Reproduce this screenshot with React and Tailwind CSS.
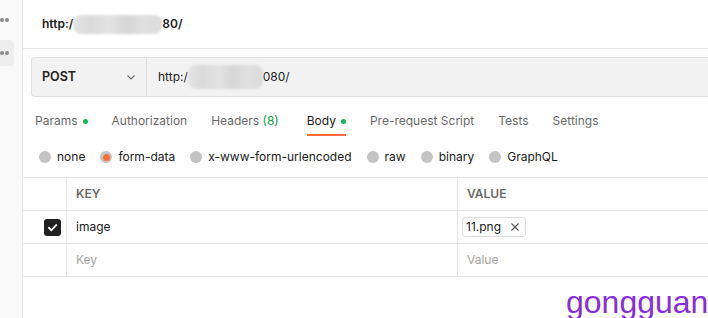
import React from "react";

function Dots() {
  return (
    <div className="flex gap-[1px]">
      <div className="w-[4px] h-[4px] rounded-full bg-[#8a8a8a]" />
      <div className="w-[4px] h-[4px] rounded-full bg-[#8a8a8a]" />
    </div>
  );
}

function Radio({ label, selected }) {
  return (
    <div className="flex items-center gap-[6px]">
      {selected ? (
        <div className="w-[12px] h-[12px] rounded-full bg-[#c4c4c4] flex items-center justify-center">
          <div className="w-[7px] h-[7px] rounded-full bg-[#ff6c37]" />
        </div>
      ) : (
        <div className="w-[12px] h-[12px] rounded-full bg-[#c4c4c4]" />
      )}
      <span>{label}</span>
    </div>
  );
}

function Blur({ w, h }) {
  return (
    <div
      className="rounded-[8px] bg-[linear-gradient(90deg,#e4e4e4,#dadada,#e3e3e3,#d6d6d6,#e0e0e0,#dbdbdb)] blur-[1px]"
      style={{ width: w, height: h }}
    />
  );
}

export default function App() {
  return (
    <div className="w-[708px] h-[318px] bg-white flex overflow-hidden relative font-['Inter',sans-serif] text-[#212121]">
      <div className="w-[23px] shrink-0 bg-[#f9f9f9] border-r border-[#e6e6e6] flex flex-col">
        <div className="h-[40px] flex items-center">
          <Dots />
        </div>
        <div className="h-[26px] w-[14px] bg-[#ededed] rounded-r-[4px] flex items-center">
          <Dots />
        </div>
      </div>
      <div className="flex-1 flex flex-col min-w-0">
        <div className="h-[49px] shrink-0 border-b border-[#e6e6e6] flex items-center pl-[19px] text-[12px] font-semibold">
          <span>http:/</span>
          <Blur w={89} h={19} />
          <span>80/</span>
        </div>
        <div className="mt-[8px] ml-[8px] h-[40px] shrink-0 flex bg-[#f2f2f2] border border-[#e0e0e0] border-r-0 rounded-l-[4px]">
          <div className="w-[115px] shrink-0 border-r border-[#e0e0e0] flex items-center justify-between pl-[10px] pr-[9px] text-[12.5px] font-semibold">
            <span>POST</span>
            <svg width="12" height="12" viewBox="0 0 12 12" fill="none">
              <path d="M2.5 4.5 L6 8 L9.5 4.5" stroke="#6b6b6b" strokeWidth="1.1" />
            </svg>
          </div>
          <div className="flex items-center pl-[11px] text-[12px] text-[#212121]">
            <span>http:/</span>
            <Blur w={75} h={24} />
            <span>080/</span>
          </div>
        </div>
        <div className="flex items-center h-[40px] pl-[12px] gap-[24px] text-[12px] text-[#6b6b6b] mt-[4px]">
          <div className="flex items-center gap-[5px]">
            <span>Params</span>
            <div className="w-[5px] h-[5px] rounded-full bg-[#0cbb52]" />
          </div>
          <span>Authorization</span>
          <span>
            Headers <span className="text-[#0c9f48]">(8)</span>
          </span>
          <div className="relative flex items-center gap-[5px] text-[#212121] h-full ml-[4px]">
            <span>Body</span>
            <div className="w-[5px] h-[5px] rounded-full bg-[#0cbb52]" />
            <div className="absolute left-0 right-0 bottom-[5px] h-[2px] bg-[#ff6c37]" />
          </div>
          <span>Pre-request Script</span>
          <span>Tests</span>
          <span>Settings</span>
        </div>
        <div className="flex items-center h-[32px] mb-[4px] pl-[16px] gap-[15px] text-[12px] text-[#212121]">
          <Radio label="none" />
          <Radio label="form-data" selected />
          <Radio label="x-www-form-urlencoded" />
          <Radio label="raw" />
          <Radio label="binary" />
          <Radio label="GraphQL" />
        </div>
        <div className="border-t border-[#e6e6e6] text-[12px]">
          <div className="flex h-[33px] border-b border-[#e6e6e6]">
            <div className="w-[44px] shrink-0 border-r border-[#e6e6e6]" />
            <div className="w-[391px] shrink-0 border-r border-[#e6e6e6] flex items-center pl-[9px] font-semibold text-[#6b6b6b] text-[12px]">
              KEY
            </div>
            <div className="flex-1 flex items-center pl-[9px] font-semibold text-[#6b6b6b] text-[12px]">
              VALUE
            </div>
          </div>
          <div className="flex h-[33px] border-b border-[#e6e6e6]">
            <div className="w-[44px] shrink-0 border-r border-[#e6e6e6] flex items-center justify-end pr-[5px]">
              <div className="w-[17px] h-[17px] rounded-[3px] bg-[#212121] flex items-center justify-center">
                <svg width="11" height="11" viewBox="0 0 12 12" fill="none">
                  <path d="M2 6.3 L4.8 9 L10 3.3" stroke="white" strokeWidth="2" strokeLinecap="round" strokeLinejoin="round" />
                </svg>
              </div>
            </div>
            <div className="w-[391px] shrink-0 border-r border-[#e6e6e6] flex items-center pl-[9px]">
              image
            </div>
            <div className="flex-1 flex items-center pl-[4px]">
              <div className="flex items-center h-[20px] border border-[#dedede] rounded-[3px] pl-[3px] pr-[5px] gap-[9px]">
                <span>11.png</span>
                <svg width="10" height="10" viewBox="0 0 10 10">
                  <path d="M1.5 1.5 L8.5 8.5 M8.5 1.5 L1.5 8.5" stroke="#555" strokeWidth="1.1" />
                </svg>
              </div>
            </div>
          </div>
          <div className="flex h-[33px] border-b border-[#e6e6e6]">
            <div className="w-[44px] shrink-0 border-r border-[#e6e6e6]" />
            <div className="w-[391px] shrink-0 border-r border-[#e6e6e6] flex items-center pl-[9px] text-[#a6a6a6]">
              Key
            </div>
            <div className="flex-1 flex items-center pl-[9px] text-[#a6a6a6]">Value</div>
          </div>
        </div>
      </div>
      <div className="absolute left-[566px] top-[284px] text-[32px] leading-[36px] text-[#8a2be2] font-['Liberation_Sans',sans-serif]">
        gongguan
      </div>
    </div>
  );
}
